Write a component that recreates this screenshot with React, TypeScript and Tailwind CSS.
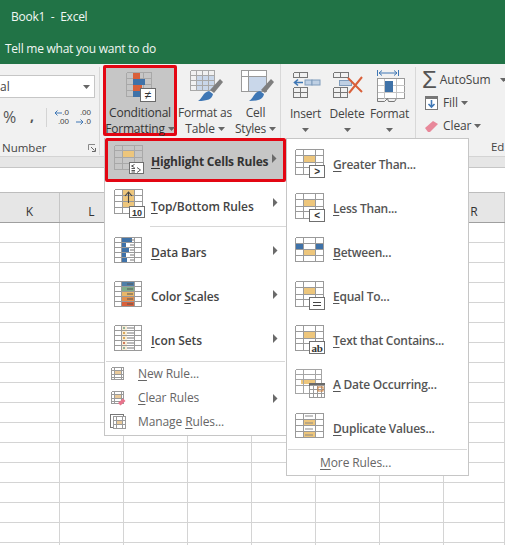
import React from "react";

const LINE = "#7f7f7f";
const ORANGE = "#edc67c";
const BLUE = "#3f72a8";

function GridLines({ xs, ys, color = LINE }: { xs: number[]; ys: number[]; color?: string }) {
  const x0 = xs[0], x1 = xs[xs.length - 1], y0 = ys[0], y1 = ys[ys.length - 1];
  return (
    <g stroke={color} strokeWidth="1" shapeRendering="crispEdges" fill="none">
      {xs.map((x) => <line key={"x" + x} x1={x} x2={x} y1={y0} y2={y1} />)}
      {ys.map((y) => <line key={"y" + y} y1={y} y2={y} x1={x0} x2={x1} />)}
    </g>
  );
}

function Badge({ x = 14.5, y = 16.5, w = 15, h = 12, children }: { x?: number; y?: number; w?: number; h?: number; children?: React.ReactNode }) {
  return (
    <g>
      <rect x={x} y={y} width={w} height={h} fill="#fff" stroke="#6f6f6f" shapeRendering="crispEdges" />
      {children}
    </g>
  );
}

const badgeText = { fontFamily: "'Liberation Sans', sans-serif", fill: "#333", textAnchor: "middle" as const };
const XS = [0.5, 8.5, 20.5, 28.5];
const YS = [0.5, 6.5, 13.5, 18.5, 25.5];

function MenuSvg({ children }: { children: React.ReactNode }) {
  return <svg width="32" height="30" viewBox="0 0 32 30" className="shrink-0">{children}</svg>;
}

function HighlightBase() {
  return (
    <>
      <rect x="8" y="7" width="13" height="6" fill={ORANGE} />
      <GridLines xs={XS} ys={YS} color="#9a9a9a" />
    </>
  );
}

function IconHighlight() {
  return (
    <MenuSvg>
      <rect x="8" y="5" width="13" height="7" fill={ORANGE} />
      <GridLines xs={XS} ys={[0.5, 5.5, 12.5, 18.5, 24.5]} color="#a8a8a8" />
      <Badge x={15.5} y={17.5} w={14} h={11}>
        <path d="M20.5 19.5l-3 1.5 3 1.5M17.5 23.5h3.5M17.5 25.5h3.5M17.5 27h3.5M23 22.5l3.5 2.5-3.5 2.5" stroke="#444" strokeWidth="0.9" fill="none" />
      </Badge>
    </MenuSvg>
  );
}

function IconTop() {
  return (
    <MenuSvg>
      <rect x="8" y="0" width="13" height="18" fill={ORANGE} />
      <GridLines xs={XS} ys={[0.5, 6.5, 12.5, 18.5, 24.5]} color="#9a9a9a" />
      <path d="M14.5 14V3M11 7l3.5-4 3.5 4" stroke="#444" strokeWidth="1.1" fill="none" />
      <Badge x={15.5} y={17.5} w={15} h={11}>
        <text x="23" y="26.5" fontSize="9" {...badgeText}>10</text>
      </Badge>
    </MenuSvg>
  );
}

function IconDataBars() {
  const rows = [[7, 11], [7, 5], [7, 8], [7, 5], [7, 6]];
  return (
    <MenuSvg>
      {rows.map(([x, w], i) => <rect key={i} x={x} y={1 + i * 5} width={w} height={4} fill={BLUE} />)}
      <GridLines xs={[0.5, 7.5, 20.5, 27.5]} ys={[0.5, 5.5, 10.5, 15.5, 20.5, 25.5]} color="#9a9a9a" />
      {[3, 8, 13, 18, 23].map((y) => <line key={y} x1="16" x2="20" y1={y} y2={y} stroke="#777" />)}
    </MenuSvg>
  );
}

function IconColorScales() {
  const colors = ["#4f7fa8", "#7fae8a", "#e9b768", "#e48f4c", "#d9603a"];
  return (
    <MenuSvg>
      {colors.map((c, i) => <rect key={i} x="7" y={1 + i * 5} width="14" height="5" fill={c} />)}
      <GridLines xs={[0.5, 7.5, 20.5, 27.5]} ys={[0.5, 5.5, 10.5, 15.5, 20.5, 25.5]} color="#9a9a9a" />
      {[3, 8, 13, 18, 23].map((y) => <line key={y} x1="13" x2="19" y1={y} y2={y} stroke="#555" />)}
    </MenuSvg>
  );
}

function IconSets() {
  const colors = ["#8fb09a", "#d8a85a", "#d8a85a", "#d07a5a", "#8fb09a"];
  return (
    <MenuSvg>
      <rect x="7" y="1" width="6" height="25" fill="#f8ecd5" />
      {colors.map((c, i) => <rect key={i} x="9" y={2 + i * 5} width="2" height="2" fill={c} />)}
      <GridLines xs={[0.5, 7.5, 20.5, 27.5]} ys={[0.5, 5.5, 10.5, 15.5, 20.5, 25.5]} color="#9a9a9a" />
      {[3, 8, 13, 18, 23].map((y) => <line key={y} x1="13" x2="20" y1={y} y2={y} stroke="#777" />)}
    </MenuSvg>
  );
}

function IconCmp({ sym }: { sym: string }) {
  return (
    <MenuSvg>
      <HighlightBase />
      <Badge>
        <text x="22" y="26" fontSize="10" {...badgeText}>{sym}</text>
      </Badge>
    </MenuSvg>
  );
}

function IconBetween() {
  return (
    <MenuSvg>
      <rect x="1" y="6" width="7" height="6" fill={BLUE} />
      <rect x="21" y="6" width="7" height="6" fill={BLUE} />
      <rect x="8" y="13" width="13" height="6" fill={ORANGE} />
      <GridLines xs={XS} ys={[0.5, 6.5, 12.5, 18.5, 24.5]} color="#9a9a9a" />
    </MenuSvg>
  );
}

function IconEqual() {
  return (
    <MenuSvg>
      <HighlightBase />
      <Badge>
        <path d="M18 21.5h8M18 24.5h8" stroke="#444" />
      </Badge>
    </MenuSvg>
  );
}

function IconText() {
  return (
    <MenuSvg>
      <HighlightBase />
      <Badge>
        <text x="22" y="26.5" fontSize="11" {...badgeText} fontFamily="'Liberation Serif', serif">ab</text>
      </Badge>
    </MenuSvg>
  );
}

function IconDate() {
  return (
    <MenuSvg>
      <rect x="6" y="10" width="15" height="5" fill={ORANGE} />
      <GridLines xs={[0.5, 8.5, 20.5, 26.5]} ys={[0.5, 5.5, 10.5, 16.5, 24.5]} color="#a5a5a5" />
      <rect x="14" y="14" width="16" height="14" fill="#fff" />
      <rect x="14" y="14" width="16" height="3" fill="#6a6a6a" />
      <GridLines xs={[14.5, 18.5, 22.5, 26.5, 29.5]} ys={[16.5, 20.5, 24.5, 28.5]} color="#9a9a9a" />
      <rect x="23" y="18" width="5" height="4" fill="none" stroke="#d0803a" />
    </MenuSvg>
  );
}

function IconDup() {
  return (
    <MenuSvg>
      <rect x="8" y="7" width="13" height="6" fill={ORANGE} />
      <rect x="8" y="19" width="13" height="5" fill={ORANGE} />
      <GridLines xs={XS} ys={[0.5, 6.5, 12.5, 18.5, 24.5]} color="#9a9a9a" />
      {[3, 10, 16, 22].map((y) => <line key={y} x1="10" x2="18" y1={y} y2={y} stroke="#888" />)}
    </MenuSvg>
  );
}

function SmallGrid() {
  return (
    <>
      <rect x="5" y="4" width="6" height="5" fill="#e8c99a" />
      <GridLines xs={[1.5, 4.5, 11.5, 13.5]} ys={[1.5, 4.5, 8.5, 11.5, 13.5]} color="#9a9a9a" />
    </>
  );
}

function IconNew() {
  return <svg width="16" height="16" viewBox="0 0 16 16" className="shrink-0"><SmallGrid /></svg>;
}
function IconClear() {
  return (
    <svg width="16" height="16" viewBox="0 0 16 16" className="shrink-0">
      <SmallGrid />
      <path d="M8 13l5-4.5 2.5 2.5-5 4.5z" fill="#e8748c" />
    </svg>
  );
}
function IconManage() {
  return (
    <svg width="16" height="16" viewBox="0 0 16 16" className="shrink-0">
      <rect x="0.5" y="0.5" width="13" height="13" fill="#fff" stroke="#777" />
      <rect x="3.5" y="2.5" width="12" height="12" fill="#fff" stroke="#9a9a9a" />
      <rect x="7" y="6" width="5" height="4" fill="#e8c99a" />
      <path d="M3.5 6h12M3.5 10h12M6.5 2.5v12M12.5 2.5v12" stroke="#9a9a9a" strokeWidth="1" shapeRendering="crispEdges" />
    </svg>
  );
}

function Arrow() {
  return (
    <svg width="5" height="9" viewBox="0 0 5 9" className="shrink-0">
      <path d="M0 0l4.5 4.5L0 9z" fill="#6a6a6a" />
    </svg>
  );
}

function Caret({ className = "" }: { className?: string }) {
  return (
    <svg width="7" height="4" viewBox="0 0 7 4" className={"inline-block shrink-0 " + className}>
      <path d="M0 0h7L3.5 4z" fill="#666" />
    </svg>
  );
}

function Label({ pre = "", u, post }: { pre?: string; u: string; post: string }) {
  return (
    <span className="whitespace-nowrap">
      {pre}
      <span className="underline underline-offset-2">{u}</span>
      {post}
    </span>
  );
}

function MainItem({ icon, pre, u, post, textClass = "mt-[2px]", active }: { icon: React.ReactNode; pre?: string; u: string; post: string; textClass?: string; active?: boolean }) {
  return (
    <div
      className={
        "flex items-center h-[44px] text-[12px] tracking-[-0.1px] " +
        (active
          ? "bg-[#c6c6c6] border-[3px] border-[#e30613] rounded-[2px] pl-[6px] text-[#333] font-bold tracking-[-0.2px]"
          : "pl-[9px] font-semibold text-[#444]")
      }
    >
      {icon}
      <div className={"flex-1 ml-[5px] " + textClass}>
        <Label pre={pre} u={u} post={post} />
      </div>
      <div className={active ? "mr-[6px] -mt-[4px]" : "mr-[8px] -mt-[4px]"}><Arrow /></div>
    </div>
  );
}

function SmallItem({ icon, pre, u, post, arrow }: { icon: React.ReactNode; pre?: string; u: string; post: string; arrow?: boolean }) {
  return (
    <div className="flex items-center h-[24px] pl-[5px] text-[12px] tracking-[-0.1px] text-[#666]">
      {icon}
      <div className="ml-[12px] flex-1"><Label pre={pre} u={u} post={post} /></div>
      {arrow && <div className="mr-[8px]"><Arrow /></div>}
    </div>
  );
}

function SubItem({ icon, pre, u, post }: { icon: React.ReactNode; pre?: string; u: string; post: string }) {
  return (
    <div className="flex items-center h-[44px] pl-[8px] text-[12px] font-semibold tracking-[-0.25px] text-[#555]">
      {icon}
      <div className="ml-[6px] mt-[2px]"><Label pre={pre} u={u} post={post} /></div>
    </div>
  );
}

function RibbonButton({ icon, l1, l2, w, className = "" }: { icon: React.ReactNode; l1: string; l2?: string; w: string; className?: string }) {
  return (
    <div className={"flex flex-col items-center shrink-0 text-[12px] leading-[16px] tracking-[-0.2px] text-[#444] " + w + " " + className}>
      {icon}
      <div className="whitespace-nowrap mt-[2px]">{l1}</div>
      <div className="whitespace-nowrap flex items-center justify-center h-[16px] gap-[3px]">
        {l2}
        <Caret />
      </div>
    </div>
  );
}

function CondIcon() {
  return (
    <svg width="32" height="32" viewBox="0 0 32 32" className="shrink-0">
      <GridLines xs={[2.5, 9.5, 19.5, 27.5]} ys={[2.5, 8.5, 14.5, 20.5, 26.5]} color="#a8a8a8" />
      <rect x="9" y="3" width="7" height="6" fill="#d9603a" />
      <rect x="9" y="9" width="12" height="6" fill={BLUE} />
      <rect x="9" y="15" width="9" height="6" fill="#d9603a" />
      <rect x="9" y="21" width="7" height="6" fill={BLUE} />
      <rect x="16.5" y="18.5" width="15" height="13" fill="#fff" stroke="#6a6a6a" shapeRendering="crispEdges" />
      <text x="24" y="29" fontSize="12" {...badgeText}>≠</text>
    </svg>
  );
}

function FormatTableIcon() {
  return (
    <svg width="36" height="36" viewBox="0 0 36 36">
      <rect x="9" y="9" width="19" height="15" fill="#c9d7ea" />
      <GridLines xs={[3.5, 9.5, 15.5, 21.5, 27.5]} ys={[3.5, 8.5, 13.5, 18.5, 23.5]} color="#a8a8a8" />
      <path d="M33 12l3 3-9 11-4-3z" fill="#7f7f7f" />
      <path d="M22 24l4 3c-1 5-5 7-15 7 4-2 5-9 11-10z" fill="#3f77b5" />
    </svg>
  );
}

function CellStylesIcon() {
  return (
    <svg width="36" height="36" viewBox="0 0 36 36">
      <rect x="3.5" y="3.5" width="25" height="21" fill="#fff" stroke="#9a9a9a" shapeRendering="crispEdges" />
      <rect x="11" y="9" width="17" height="15" fill="#c9d7ea" />
      <path d="M3.5 9.5h25M10.5 3.5v21" stroke="#9a9a9a" shapeRendering="crispEdges" />
      <path d="M33 12l3 3-9 11-4-3z" fill="#7f7f7f" />
      <path d="M22 24l4 3c-1 5-5 7-15 7 4-2 5-9 11-10z" fill="#3f77b5" />
    </svg>
  );
}

function InsertIcon() {
  return (
    <svg width="32" height="34" viewBox="0 0 32 34">
      <GridLines xs={[3.5, 9.5, 17.5]} ys={[2.5, 7.5]} color="#777" />
      <GridLines xs={[3.5, 10.5, 17.5]} ys={[17.5, 22.5, 27.5]} color="#777" />
      <rect x="15" y="10" width="7" height="5" fill="#bfd0e4" stroke="#7f9cbc" />
      <rect x="22" y="10" width="8" height="5" fill="#bfd0e4" stroke="#7f9cbc" />
      <path d="M13 12.5H5M8 9.5l-3.5 3 3.5 3" stroke="#3f77b5" strokeWidth="1.6" fill="none" />
    </svg>
  );
}

function DeleteIcon() {
  return (
    <svg width="34" height="34" viewBox="0 0 34 34">
      <GridLines xs={[3.5, 10.5, 18.5]} ys={[2.5, 7.5]} color="#777" />
      <GridLines xs={[3.5, 10.5, 17.5]} ys={[17.5, 22.5, 27.5]} color="#777" />
      <rect x="9.5" y="10.5" width="12" height="5" fill="#bfd0e4" stroke="#7f9cbc" />
      <path d="M18 8l14 14M32 7L19 23" stroke="#d9603a" strokeWidth="2" fill="none" />
    </svg>
  );
}

function FormatIcon() {
  return (
    <svg width="32" height="36" viewBox="0 0 32 36">
      <path d="M3.5 2v6M24.5 2v6" stroke="#3f77b5" />
      <path d="M5 5h18M8 2.5L5 5l3 2.5M20 2.5L23 5l-3 2.5" stroke="#3f77b5" fill="none" />
      <rect x="3.5" y="10.5" width="27" height="20" fill="#fff" stroke="#9a9a9a" shapeRendering="crispEdges" />
      <path d="M10.5 10.5v20M22.5 10.5v20M3.5 17.5h27M3.5 24.5h27" stroke="#c4c4c4" shapeRendering="crispEdges" />
      <rect x="11" y="13" width="8" height="11" fill={BLUE} />
      <path d="M3.5 30.5v3h7l3-3 1 3h6l2-3" stroke="#777" fill="none" />
    </svg>
  );
}

function DecIcon({ top, bottom, left }: { top: string; bottom: string; left?: boolean }) {
  return (
    <div className="relative w-[16px] h-[19px] text-[8px] leading-[9.5px] text-[#444] font-['Liberation_Sans',sans-serif]">
      <div className="text-right pr-[1px]">{top}</div>
      <div className="text-right pr-[1px]">{bottom}</div>
      <svg width="8" height="6" viewBox="0 0 8 6" className={"absolute " + (left ? "left-0 top-[2px]" : "left-0 top-[11px]")}>
        {left ? <path d="M8 3H1M3.5 .5L1 3l2.5 2.5" stroke="#3f77b5" fill="none" /> : <path d="M0 3h7M4.5 .5L7 3 4.5 5.5" stroke="#3f77b5" fill="none" />}
      </svg>
    </div>
  );
}

const COLS: [string, string][] = [["K", "w-[60px]"], ["L", "w-[64px]"], ["", "w-[64px]"], ["", "w-[64px]"], ["", "w-[64px]"], ["", "w-[64px]"], ["", "w-[64px]"], ["R", "w-[61px]"]];
const ROWS = Array.from({ length: 17 }, (_, i) => i);

export default function App() {
  return (
    <div className="relative w-[505px] h-[545px] overflow-hidden bg-white font-['Open_Sans',sans-serif] text-[#444]">
      {/* Title band */}
      <div className="h-[64px] bg-[#217346] text-[#f2f7f4] text-[12px] tracking-[-0.25px] flex flex-col">
        <div className="pl-[11px] pt-[8px] h-[32px] leading-[18px] whitespace-pre">Book1  -  Excel</div>
        <div className="pl-[5px] pt-[8px] leading-[18px]">Tell me what you want to do</div>
      </div>

      {/* Ribbon */}
      <div className="flex h-[93px] bg-[#f1f1f1] border-b border-[#d4d4d4]">
        <div className="w-[100px] shrink-0 flex flex-col mt-[3px] mb-[1px] border-r border-[#d8d8d8]">
          <div className="mt-[8px] w-[95px] h-[23px] bg-white border-y border-r border-[#c6c6c6] flex items-center justify-between pr-[4px] text-[12px]">
            <span>al</span>
            <Caret />
          </div>
          <div className="flex items-center h-[20px] mt-[9px]">
            <span className="w-[30px] pl-[3px] text-[16px] leading-[20px] text-[#555]">%</span>
            <span className="w-[16px] text-[14px] font-bold leading-[20px] text-[#555] -mt-[3px]">,</span>
            <span className="w-px h-[19px] bg-[#d4d4d4] mr-[7px]" />
            <DecIcon top=".0" bottom=".00" left />
            <span className="w-[6px]" />
            <DecIcon top=".00" bottom=".0" />
          </div>
          <div className="mt-auto -mb-[1px] flex items-center justify-between pl-[2px] pr-[3px] text-[11.5px] leading-[16px]">
            <span>Number</span>
            <svg width="8" height="8" viewBox="0 0 8 8"><path d="M.5 6V.5H7" stroke="#888" fill="none" /><path d="M3 3l3.5 3.5M7.5 4v3.5H4" stroke="#666" fill="none" /></svg>
          </div>
        </div>

        <div className="w-[181px] shrink-0 flex mb-[1px] border-r border-[#d8d8d8] items-start">
          <div className="ml-[3px] mt-[1px] w-[74px] h-[71px] shrink-0 bg-[#c6c6c6] border-[3px] border-[#e30613] rounded-[2px] flex flex-col items-center text-[12px] leading-[16px] tracking-[-0.2px] text-[#333]">
            <div className="pt-[2px] shrink-0"><CondIcon /></div>
            <div className="whitespace-nowrap mt-[3px] shrink-0">Conditional</div>
            <div className="whitespace-nowrap flex items-center gap-[3px] h-[16px] shrink-0">Formatting<Caret /></div>
          </div>
          <RibbonButton w="w-[54px]" className="ml-[1px] mt-[3px]" icon={<FormatTableIcon />} l1="Format as" l2="Table" />
          <RibbonButton w="w-[47px]" className="mt-[3px]" icon={<CellStylesIcon />} l1="Cell" l2="Styles" />
        </div>

        <div className="w-[135px] shrink-0 flex items-start mt-[3px] mb-[1px] pl-[4px] border-r border-[#d8d8d8]">
          <RibbonButton w="w-[41px]" className="pt-[3px]" icon={<InsertIcon />} l1="Insert" />
          <RibbonButton w="w-[42px]" className="pt-[3px]" icon={<DeleteIcon />} l1="Delete" />
          <RibbonButton w="w-[43px]" className="pt-[1px]" icon={<FormatIcon />} l1="Format" />
        </div>

        <div className="flex-1 flex flex-col mt-[3px] mb-[1px] pl-[6px] text-[12px] tracking-[-0.1px] text-[#444] overflow-hidden">
          <div className="flex items-center h-[23px] mt-[1px] gap-[3px] whitespace-nowrap">
            <span className="w-[21px] text-center text-[24px] leading-[20px] font-['Liberation_Sans',sans-serif] text-[#555]">Σ</span>
            <span>AutoSum</span>
            <Caret className="ml-[6px]" />
          </div>
          <div className="flex items-center h-[23px] gap-[3px] pl-[1px] whitespace-nowrap">
            <svg width="17" height="17" viewBox="0 0 17 17" className="shrink-0">
              <rect x="2.5" y="2.5" width="12" height="13" fill="#fff" stroke="#777" />
              <rect x="2" y="2" width="13" height="3" fill="#777" />
              <path d="M8.5 6v7M5.5 10l3 3 3-3" stroke="#3f77b5" strokeWidth="1.6" fill="none" />
            </svg>
            <span>Fill</span>
            <Caret />
          </div>
          <div className="flex items-center h-[23px] gap-[3px] pl-[1px] whitespace-nowrap">
            <svg width="17" height="17" viewBox="0 0 17 17" className="shrink-0">
              <path d="M2 11l8-7 5 3-8 8H5z" fill="#e8889a" />
            </svg>
            <span>Clear</span>
            <Caret />
          </div>
          <div className="mt-auto pl-[69px] leading-[16px] text-[11.5px]">Ed</div>
        </div>
      </div>

      {/* Strip and formula bar */}
      <div className="h-[10px] bg-[#e6e6e6]" />
      <div className="h-[25px] bg-white border-t border-[#c6c6c6]" />

      {/* Column headers */}
      <div className="flex h-[31px] bg-[#e6e6e6] border-y border-t-[#bdbdbd] border-b-[#9f9f9f] text-[12px] text-[#333]">
        {COLS.map(([c, w], i) => (
          <div key={i} className={"shrink-0 h-full pt-[8px] flex items-center justify-center border-r border-r-[#c6c6c6] " + w}>{c}</div>
        ))}
      </div>

      {/* Sheet */}
      {ROWS.map((r) => (
        <div key={r} className="flex h-[20px]">
          {COLS.map(([, w], i) => (
            <div key={i} className={"shrink-0 border-r border-b border-[#d4d4d4] " + w} />
          ))}
        </div>
      ))}

      {/* Main dropdown */}
      <div className="absolute left-[104px] top-[138px] w-[183px] h-[298px] bg-white border border-[#c6c6c6] border-t-0 z-10">
        <MainItem active icon={<IconHighlight />} u="H" post="ighlight Cells Rules" textClass="mt-[4px] -ml-[2px]" />
        <MainItem icon={<IconTop />} u="T" post="op/Bottom Rules" textClass="mt-[6px]" />
        <div className="h-[4px] ml-[45px] border-t border-[#d8d8d8]" />
        <MainItem icon={<IconDataBars />} u="D" post="ata Bars" />
        <MainItem icon={<IconColorScales />} pre="Color " u="S" post="cales" />
        <MainItem icon={<IconSets />} u="I" post="con Sets" />
        <div className="h-px mx-[1px] -mt-[1px] bg-[#d8d8d8]" />
        <SmallItem icon={<IconNew />} u="N" post="ew Rule..." />
        <SmallItem icon={<IconClear />} u="C" post="lear Rules" arrow />
        <SmallItem icon={<IconManage />} pre="Manage " u="R" post="ules..." />
      </div>

      {/* Sub dropdown */}
      <div className="absolute left-[286px] top-[138px] w-[183px] h-[338px] bg-white border border-[#c6c6c6] pt-[3px] z-20">
        <SubItem icon={<IconCmp sym=">" />} u="G" post="reater Than..." />
        <SubItem icon={<IconCmp sym="<" />} u="L" post="ess Than..." />
        <SubItem icon={<IconBetween />} u="B" post="etween..." />
        <SubItem icon={<IconEqual />} u="E" post="qual To..." />
        <SubItem icon={<IconText />} u="T" post="ext that Contains..." />
        <SubItem icon={<IconDate />} u="A" post=" Date Occurring..." />
        <SubItem icon={<IconDup />} u="D" post="uplicate Values..." />
        <div className="h-px mx-[1px] -mt-[1px] bg-[#d8d8d8]" />
        <div className="h-[25px] flex items-center pl-[33px] text-[12px] tracking-[-0.1px] text-[#666]">
          <Label u="M" post="ore Rules..." />
        </div>
      </div>
    </div>
  );
}
